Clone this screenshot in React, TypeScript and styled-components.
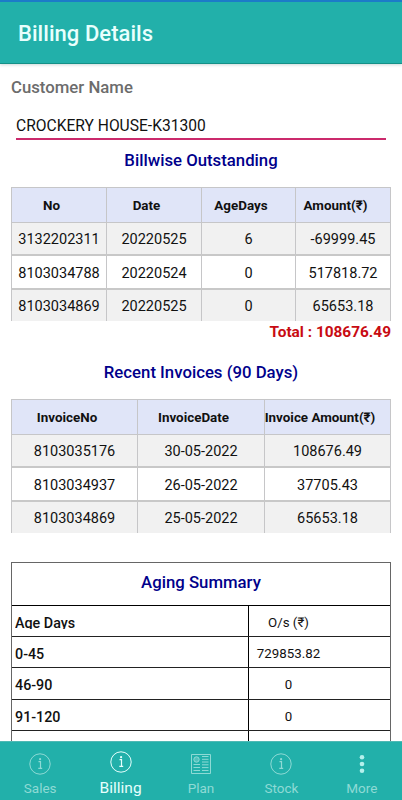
import React from "react";
import styled, { createGlobalStyle } from "styled-components";

const Global = createGlobalStyle`
  *{box-sizing:border-box}
  html,body{margin:0;height:100%;background:#fff}
  body{font-family:Roboto,"Noto Sans",sans-serif;color:#111;overflow:hidden}
`;
const Screen = styled.div`
  width: 402px; height: 800px; display: flex; flex-direction: column; overflow: hidden; background: #fff;
`;
const Header = styled.header`
  flex: none; height: 64px; background: #22b0aa;
  border-top: 2px solid #1c7bc8; border-bottom: 1px solid #159087;
  padding: 2px 0 0 18px; display: flex; align-items: center;
  box-shadow: 0 1px 3px rgba(0, 60, 60, 0.2);
  h1 { margin: 0; font-size: 22px; font-weight: 500; color: #e9fffd; letter-spacing: 0.05px; }
`;
const Content = styled.main`
  flex: 1; min-height: 0; overflow: hidden; padding: 0 11px; display: flex; flex-direction: column;
`;
const Label = styled.div`
  flex: none; margin-top: 13px; height: 20px; line-height: 20px; font-size: 16.75px; font-weight: 500; color: #6c6c6c;
`;
const Field = styled.div`
  flex: none; margin: 20px 5px 0 5px; height: 23px; line-height: 18px; font-size: 15.6px; color: #111;
  border-bottom: 2px solid #cb2a6c; white-space: nowrap;
`;
const Title = styled.h2<{ $top: number }>`
  margin: ${(p) => p.$top}px 0 0; height: 20px; line-height: 20px; text-align: center;
  font-size: 16.75px; font-weight: 500; color: #00008b; flex: none;
`;
const Table = styled.div<{ $cols: string; $top: number }>`
  margin-top: ${(p) => p.$top}px; width: 380px; flex: none;
  display: grid; grid-template-columns: ${(p) => p.$cols}; grid-template-rows: 35px 33px 34px 31px;
  border-left: 1px solid #c6c6c8; border-top: 1px solid #c6c6c8;
`;
const HeadCell = styled.div`
  background: #e0e5f8; border-right: 1px solid #c6c6c8; border-bottom: 1px solid #c6c6c8;
  padding-right: 15px; display: flex; align-items: center; justify-content: center;
  font-size: 13.4px; font-weight: 700; white-space: nowrap;
`;
const Cell = styled.div<{ $row: number; $last: boolean }>`
  background: ${(p) => (p.$row % 2 ? "#fff" : "#f1f1f1")};
  border-right: 1px solid #c6c6c8; border-bottom: ${(p) => (p.$last ? "0" : "2px solid #c8c8c8")};
  display: flex; align-items: center; justify-content: center; padding-top: 2px;
  font-size: 14.5px; white-space: nowrap;
`;
const Total = styled.div`
  flex: none; height: 23px; line-height: 23px; text-align: right; font-size: 15.4px; font-weight: 700; color: #c80b12;
`;
const Aging = styled.section`
  margin-top: 29px; width: 380px; flex: none; border: 1px solid #666; border-bottom: 0;
`;
const AgingTitle = styled.div`
  height: 43px; border-bottom: 1px solid #000; display: flex; justify-content: center;
`;
const AgingRow = styled.div<{ $h: number }>`
  height: ${(p) => p.$h}px; display: grid; grid-template-columns: 237px 1fr; border-bottom: 1px solid #222;
`;
const AgeName = styled.div`
  border-right: 1px solid #000; padding: 8px 0 0 3px; font-size: 14.3px; font-weight: 500; line-height: 18px;
`;
const ClippedText = styled.div`
  height: 15px; overflow: hidden;
`;
const AgeValue = styled.div`
  width: 79px; padding-top: 8px; line-height: 18px; text-align: center; font-size: 13.3px;
`;
const TabBar = styled.nav`
  flex: none; height: 59px; background: #22b0aa; border-top: 1px solid #4fb9b4;
  display: grid; grid-template-columns: repeat(5, 1fr);
`;
const Tab = styled.div<{ $active?: boolean }>`
  display: flex; flex-direction: column; align-items: center;
  padding-top: ${(p) => (p.$active ? 8 : 10)}px; color: ${(p) => (p.$active ? "#e6fffd" : "#8edad5")};
  svg { flex: none; display: block; }
  span { margin-top: ${(p) => (p.$active ? 5 : 3)}px; line-height: 18px; font-size: ${(p) => (p.$active ? 15.5 : 13.5)}px; }
`;

const InfoIcon = () => (
  <svg width="24" height="24" viewBox="0 0 24 24" fill="none" stroke="currentColor" strokeWidth="1">
    <circle cx="12" cy="12" r="10.2" />
    <path d="M10.5 9.6h2v6.7M10.3 16.4h3.9" strokeWidth="1.2" />
    <circle cx="12.1" cy="7.2" r="1.1" fill="currentColor" stroke="none" />
  </svg>
);
const PlanIcon = () => (
  <svg width="24" height="24" viewBox="0 0 24 24" fill="none" stroke="currentColor" strokeWidth="1">
    <path d="M2.5 2.5h19v19h-19z" />
    <circle cx="7.5" cy="7.5" r="2.7" fill="currentColor" fillOpacity=".45" />
    <path d="M4.5 12.5h6.5M4.5 15.5h6.5M4.5 18.5h6.5M13 4.5h6.5M13 7.3h6.5M13 10h6.5M13 12.8h6.5M13 15.6h6.5M13 18.5h6.5" />
  </svg>
);
const MoreIcon = () => (
  <svg width="24" height="24" viewBox="0 0 24 24" fill="#b5f0ec">
    <circle cx="12" cy="5.3" r="2.3" /><circle cx="12" cy="12" r="2.3" /><circle cx="12" cy="18.7" r="2.3" />
  </svg>
);

const bills = [
  ["3132202311", "20220525", "6", "-69999.45"],
  ["8103034788", "20220524", "0", "517818.72"],
  ["8103034869", "20220525", "0", "65653.18"],
];
const invoices = [
  ["8103035176", "30-05-2022", "108676.49"],
  ["8103034937", "26-05-2022", "37705.43"],
  ["8103034869", "25-05-2022", "65653.18"],
];

function DataTable({ head, rows, cols, top }: { head: string[]; rows: string[][]; cols: string; top: number }) {
  return (
    <Table $cols={cols} $top={top}>
      {head.map((h) => <HeadCell key={h}>{h}</HeadCell>)}
      {rows.map((r, i) => r.map((c, j) => (
        <Cell key={`${i}-${j}`} $row={i} $last={i === rows.length - 1}>{c}</Cell>
      )))}
    </Table>
  );
}

export default function App() {
  return (
    <>
      <Global />
      <Screen>
        <Header><h1>Billing Details</h1></Header>
        <Content>
          <Label>Customer Name</Label>
          <Field>CROCKERY HOUSE-K31300</Field>
          <Title $top={10}>Billwise Outstanding</Title>
          <DataTable top={17} cols="95px 95px 94px 95px" head={["No", "Date", "AgeDays", "Amount(₹)"]} rows={bills} />
          <Total>Total : 108676.49</Total>
          <Title $top={18}>Recent Invoices (90 Days)</Title>
          <DataTable top={17} cols="126px 127px 126px" head={["InvoiceNo", "InvoiceDate", "Invoice Amount(₹)"]} rows={invoices} />
          <Aging>
            <AgingTitle><Title $top={9}>Aging Summary</Title></AgingTitle>
            <AgingRow $h={31}><AgeName><ClippedText>Age Days</ClippedText></AgeName><AgeValue>O/s (₹)</AgeValue></AgingRow>
            <AgingRow $h={31}><AgeName>0-45</AgeName><AgeValue>729853.82</AgeValue></AgingRow>
            <AgingRow $h={32}><AgeName>46-90</AgeName><AgeValue>0</AgeValue></AgingRow>
            <AgingRow $h={31}><AgeName>91-120</AgeName><AgeValue>0</AgeValue></AgingRow>
            <AgingRow $h={31}><AgeName /><AgeValue /></AgingRow>
          </Aging>
        </Content>
        <TabBar>
          <Tab><InfoIcon /><span>Sales</span></Tab>
          <Tab $active><InfoIcon /><span>Billing</span></Tab>
          <Tab><PlanIcon /><span>Plan</span></Tab>
          <Tab><InfoIcon /><span>Stock</span></Tab>
          <Tab><MoreIcon /><span>More</span></Tab>
        </TabBar>
      </Screen>
    </>
  );
}
